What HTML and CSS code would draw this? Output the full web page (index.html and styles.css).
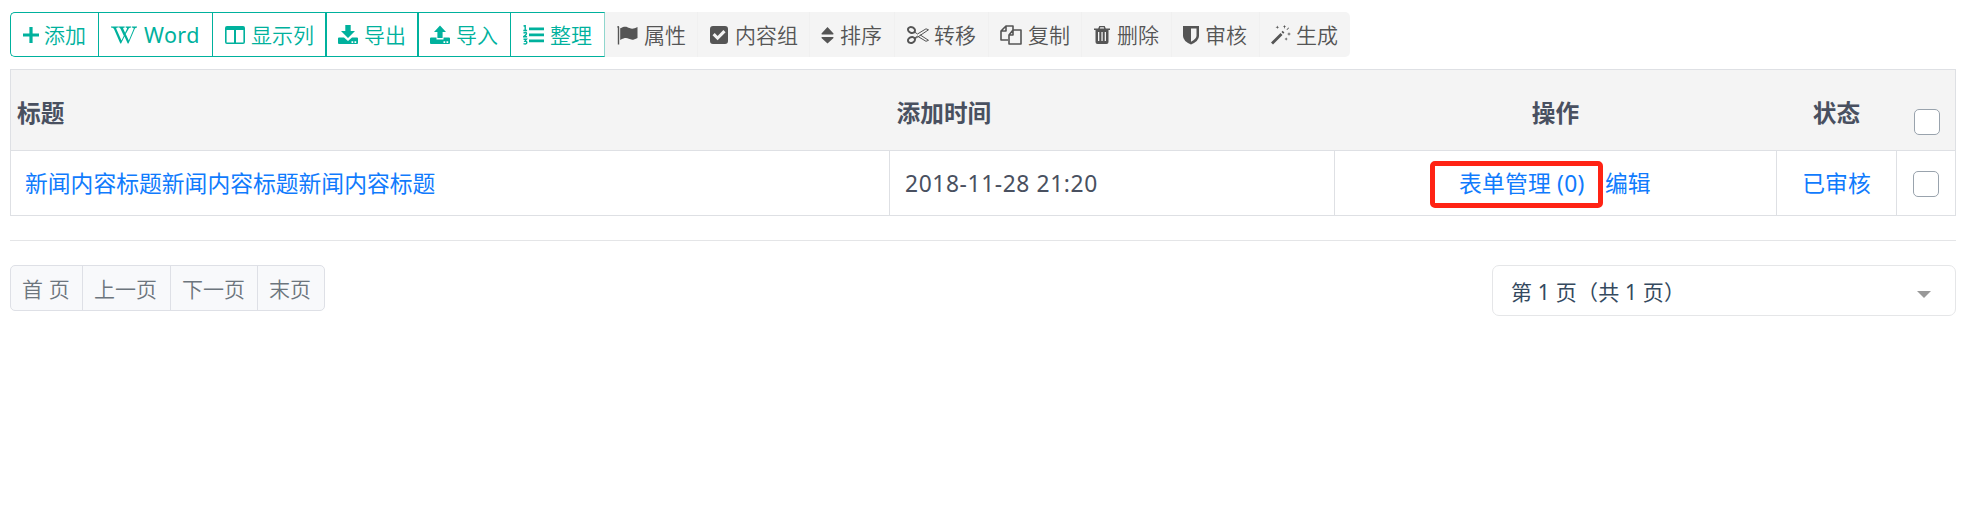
FILE: index.html
```
<!DOCTYPE html>
<html lang="zh-CN">
<head>
<meta charset="utf-8">
<title>内容管理</title>
<link rel="stylesheet" href="styles.css">
</head>
<body>
<nav class="toolbar">
  <a class="btn green w-add first"><svg class="icon" viewBox="0 0 18 20"><path d="M7.400 2h3.200v6.400H17v3.200h-6.400V18H7.400v-6.400H1V8.400h6.400z"/></svg><span>添加</span></a>
  <a class="btn green w-word"><svg class="icon" viewBox="0 0 28 20"><path d="M1 1.500h7v.9c-2 .1-2 .7-1.500 1.900l5 11.200 2.300-4.800L10.600 4C10 2.700 9.500 2.400 8.200 2.400v-.9h6.500v.9c-1.700.1-1.800.6-1.300 1.700l1.700 3.600 1.700-3.500c.6-1.300.2-1.700-1.200-1.800v-.9H21v.9c-1.500.1-2 .6-2.700 2L15.700 9l3.100 6.500L23.500 4.300c.6-1.400 0-1.800-1.700-1.900v-.9H27v.9c-1.300.1-1.800.6-2.500 2L18.500 18.500h-.8l-3.200-6.900-3.400 6.900h-.8L4.100 4.300C3.500 2.900 2.900 2.500 1 2.400z"/></svg><span>Word</span></a>
  <a class="btn green w-cols"><svg class="icon" viewBox="0 0 20 20"><path fill-rule="evenodd" d="M2 1h16a2 2 0 0 1 2 2v14a2 2 0 0 1-2 2H2a2 2 0 0 1-2-2V3a2 2 0 0 1 2-2zm-.4 4v12.400H9V5zm9.400 0v12.400h7.400V5z"/></svg><span>显示列</span></a>
  <a class="btn green w-out thick"><svg class="icon" viewBox="0 0 20 20"><path d="M7.300 0h5.400v6H17l-7 7-7-7h4.300z"/><path fill-rule="evenodd" d="M1 12.500h5l4 3.600 4-3.600h5q1 0 1 1v4.500q0 1-1 1H1q-1 0-1-1v-4.500q0-1 1-1zm12.500 3.800v1.600h1.700v-1.600zm3 0v1.600h1.700v-1.600z"/></svg><span>导出</span></a>
  <a class="btn green w-in thick"><svg class="icon" viewBox="0 0 20 20"><path d="M10 .5l6 6.500h-3.400v6H7.400V7H4z"/><path fill-rule="evenodd" d="M1 12.500h5.500v2h7v-2H19q1 0 1 1v4.500q0 1-1 1H1q-1 0-1-1v-4.500q0-1 1-1zm12.500 3.800v1.600h1.700v-1.600zm3 0v1.600h1.700v-1.600z"/></svg><span>导入</span></a>
  <a class="btn green w-sort last"><svg class="icon" viewBox="0 0 21 20"><path d="M6 2.500h15v2.800H6zm0 6h15v2.800H6zm0 6h15v2.800H6z"/><path fill="none" stroke="currentColor" stroke-width="1.400" d="M.5 1.200l1.700-.7v5M.3 5.500h3.800M.5 8q3-1.200 3 .4 0 1-3 3.300h3.600M.5 14.200h3l-1.500 2q2 0 1.800 1.600-.5 1.800-3.300.9"/></svg><span>整理</span></a>
  <a class="btn gray w-attr"><svg class="icon" viewBox="0 0 21 20"><path d="M.2 2a1 1 0 1 1 2 0v17.500H.8V3zM3.200 3.300C8 .5 10 1.800 12.500 3c2.600 1.200 4.600.6 8-.9v10.800c-4 2.300-6.200 2-8.700.9-2.400-1.100-4.500-1-8.600 1.300z"/></svg><span>属性</span></a>
  <a class="btn gray w-group"><svg class="icon" viewBox="0 0 18 20"><path fill-rule="evenodd" d="M3 1h12a3 3 0 0 1 3 3v12a3 3 0 0 1-3 3H3a3 3 0 0 1-3-3V4a3 3 0 0 1 3-3zm4.600 14.300l8-8-2.200-2.200-5.800 5.800-2.900-2.900-2.200 2.200z"/></svg><span>内容组</span></a>
  <a class="btn gray w-order"><svg class="icon" viewBox="0 0 13 20"><path d="M6.500 2l6 6.500q.3 1-.7 1H1.200q-1 0-.7-1zM1.200 12h10.600q1 0 .7 1l-6 5.500L.5 13q-.3-1 .7-1z"/></svg><span>排序</span></a>
  <a class="btn gray w-move"><svg class="icon" viewBox="0 0 22 20"><g fill="none" stroke="currentColor"><ellipse cx="4.500" cy="5" rx="3.600" ry="2.800" transform="rotate(25 4.500 5)" stroke-width="2"/><ellipse cx="4.500" cy="15" rx="3.600" ry="2.800" transform="rotate(-25 4.500 15)" stroke-width="2"/><path stroke-width="1" d="M7.500 7l3 2L19 3.800l2.500 1-9.500 6.400L7.500 14M7.500 13l3-1.800L19 16.300l2.500-1L13 9.800"/></g></svg><span>转移</span></a>
  <a class="btn gray w-copy"><svg class="icon" viewBox="0 0 22 20"><path fill="none" stroke="currentColor" stroke-width="1.600" stroke-linejoin="round" d="M8 15H1V6l5-5h7v4M6 1v5H1M13 5h8v14H9V10zv5H9"/></svg><span>复制</span></a>
  <a class="btn gray w-del"><svg class="icon" viewBox="0 0 16 20"><path fill-rule="evenodd" d="M0 3.400h4.200L5.300 1h5.400l1.100 2.400H16V5h-1.500v12q0 2-2 2h-9q-2 0-2-2V5H0zm5.800 0h4.400l-.5-1.100H6.300zM4 7v9h1.300V7zm3.400 0v9h1.300V7zm3.300 0v9H12V7z"/></svg><span>删除</span></a>
  <a class="btn gray w-check"><svg class="icon" viewBox="0 0 16 20"><path fill-rule="evenodd" d="M0 1h16v10q0 5-8 8.500Q0 16 0 11zm8 2.500v13.200q5.500-3 5.500-6V3.500z"/></svg><span>审核</span></a>
  <a class="btn gray w-make"><svg class="icon" viewBox="0 0 20 20"><path d="M0 17.500L9.500 8l2 2L2 19.500zM4.500 2.300l1.400-.5.4-1.400.5 1.400 1.400.5-1.400.4-.5 1.400-.4-1.400zM12 1.500l1-.5.500-1 .5 1 1 .5-1 .5-.5 2-.5-2zM16 9l1.500-.5.5-1.500.5 1.500L20 9l-1.500.5-.5 1.500-.5-1.500zM13.500 14l1.200-.4.4-1.300.5 1.300 1.200.4-1.200.5-.5 1.200-.4-1.200zM15.500 4.500l2-2 .6.600-2 2zM10.500 7l1.200-1.200 1.700 1.700-1.200 1.200z"/></svg><span>生成</span></a>
</nav>

<table class="list">
  <colgroup><col class="c-title"><col class="c-time"><col class="c-op"><col class="c-state"><col class="c-pick"></colgroup>
  <thead><tr><th>标题</th><th>添加时间</th><th class="center">操作</th><th class="center">状态</th><th class="pick"><span class="box"></span></th></tr></thead>
  <tbody><tr>
    <td><a>新闻内容标题新闻内容标题新闻内容标题</a></td>
    <td class="date">2018-11-28 21:20</td>
    <td class="ops"><div class="op-row"><a class="marked">表单管理 (0)</a><a>编辑</a></div></td>
    <td class="center state"><a>已审核</a></td>
    <td class="pick"><span class="box"></span></td>
  </tr></tbody>
</table>

<footer class="footer">
  <div class="pages"><a class="p1">首 页</a><a class="p2">上一页</a><a class="p3">下一页</a><a class="p4">末页</a></div>
  <div class="select"><span>第 1 页（共 1 页）</span><i class="caret"></i></div>
</footer>
</body>
</html>
```
FILE: styles.css
```
* { box-sizing: border-box; }
body {
  margin: 0;
  padding: 12px 10px 0;
  background: #fff;
  color: #495060;
  font-family: "Noto Sans", "Noto Sans CJK SC", sans-serif;
  font-size: 23px;
}
.toolbar { display: flex; height: 45px; margin-bottom: 12px; }
.btn {
  display: flex;
  align-items: center;
  gap: 6px;
  height: 45px;
  padding-left: 11px;
  font-family: "Noto Sans CJK SC", sans-serif;
  font-size: 21px;
  line-height: 43px;
  white-space: nowrap;
  font-weight: 350;
}
.icon { height: 20px; width: auto; flex: none; fill: currentColor; }
.green { color: #00b19d; border: 1px solid #00b19d; border-right-width: 0; }
.gray { color: #555; background: #f4f4f4; border-right: 1px solid #f0f0f0; }
.green.first { border-radius: 5px 0 0 5px; }
.green.thick { border-left-width: 2px; }
.green.last { border-right: 1px solid #8fd6cd; }
.w-add { width: 88px; gap: 4px; }
.w-word { width: 114px; padding-left: 11px; }
.w-word span { font-family: "Noto Sans", sans-serif; font-weight: 400; font-size: 21.500px; letter-spacing: .4px; }
.w-cols { width: 113px; padding-left: 12px; }
.w-out { width: 92px; }
.w-in { width: 93px; }
.w-sort { width: 95px; padding-left: 12px; }
.w-attr { width: 93px; padding-left: 12px; }
.w-group { width: 112px; padding-left: 12px; gap: 7px; }
.w-order { width: 85px; }
.w-move { width: 94px; padding-left: 12px; gap: 5px; }
.w-copy { width: 93px; }
.w-del { width: 90px; padding-left: 12px; gap: 7px; }
.w-check { width: 88px; }
.w-make { width: 90px; gap: 5px; border-right: 0; border-radius: 0 5px 5px 0; }

.list { width: 1945px; table-layout: fixed; border-collapse: collapse; border: 1px solid #dee0e4; }
.c-title { width: 879px; }
.c-time { width: 445px; }
.c-op { width: 442px; }
.c-state { width: 120px; }
.c-pick { width: 59px; }
.list th { height: 81px; padding: 5px 7px 0; background: #f4f4f4; font-size: 23.700px; line-height: 32px; text-align: left; }
.list th:first-child { padding-left: 6px; }
.list td { height: 65px; padding: 2px 15px 0; border: 1px solid #dee0e4; font-size: 22.800px; line-height: 32px; }
.list td:first-child { padding-left: 14px; }
.list .date { letter-spacing: .6px; }
.list a { color: #107bfd; }
.list .center { text-align: center; }
.list .state { padding: 2px 0 0; }
.list .ops { padding: 2px 0 0 95px; }
.op-row { display: flex; align-items: center; gap: 2px; }
.marked { width: 173px; height: 47px; padding-left: 24px; border: 5px solid #ff2314; border-radius: 5px; line-height: 36px; white-space: nowrap; letter-spacing: .2px; }
.list .pick { padding: 2px 0 0 16px; }
.list th.pick { padding: 24px 0 0 17px; }
.box { display: block; width: 26px; height: 26px; border: 1px solid #99a3ad; border-radius: 5px; background: #fff; }

.footer { display: flex; justify-content: space-between; align-items: flex-start; margin-top: 24px; padding-top: 24px; border-top: 1px solid #e4e5e7; }
.pages { display: flex; height: 46px; border: 1px solid #dee0e6; border-radius: 5px; background: #f8f9fb; color: #6c757d; font-family: "Noto Sans CJK SC", sans-serif; font-size: 21px; font-weight: 350; line-height: 44px; }
.pages a { padding-left: 11px; border-right: 1px solid #dee0e6; white-space: nowrap; }
.pages a:last-child { border-right: 0; }
.p1 { width: 72px; word-spacing: 1px; }
.p2 { width: 88px; }
.p3 { width: 87px; }
.p4 { width: 66px; }
.select { display: flex; align-items: center; justify-content: space-between; width: 464px; height: 51px; padding: 0 24px 0 18px; border: 1px solid #e5e6e8; border-radius: 7px; color: #34495e; font-size: 21px; letter-spacing: .2px; }
.caret { margin-top: 7px; border: 7px solid transparent; border-top-color: #999; border-bottom: 0; }
```
